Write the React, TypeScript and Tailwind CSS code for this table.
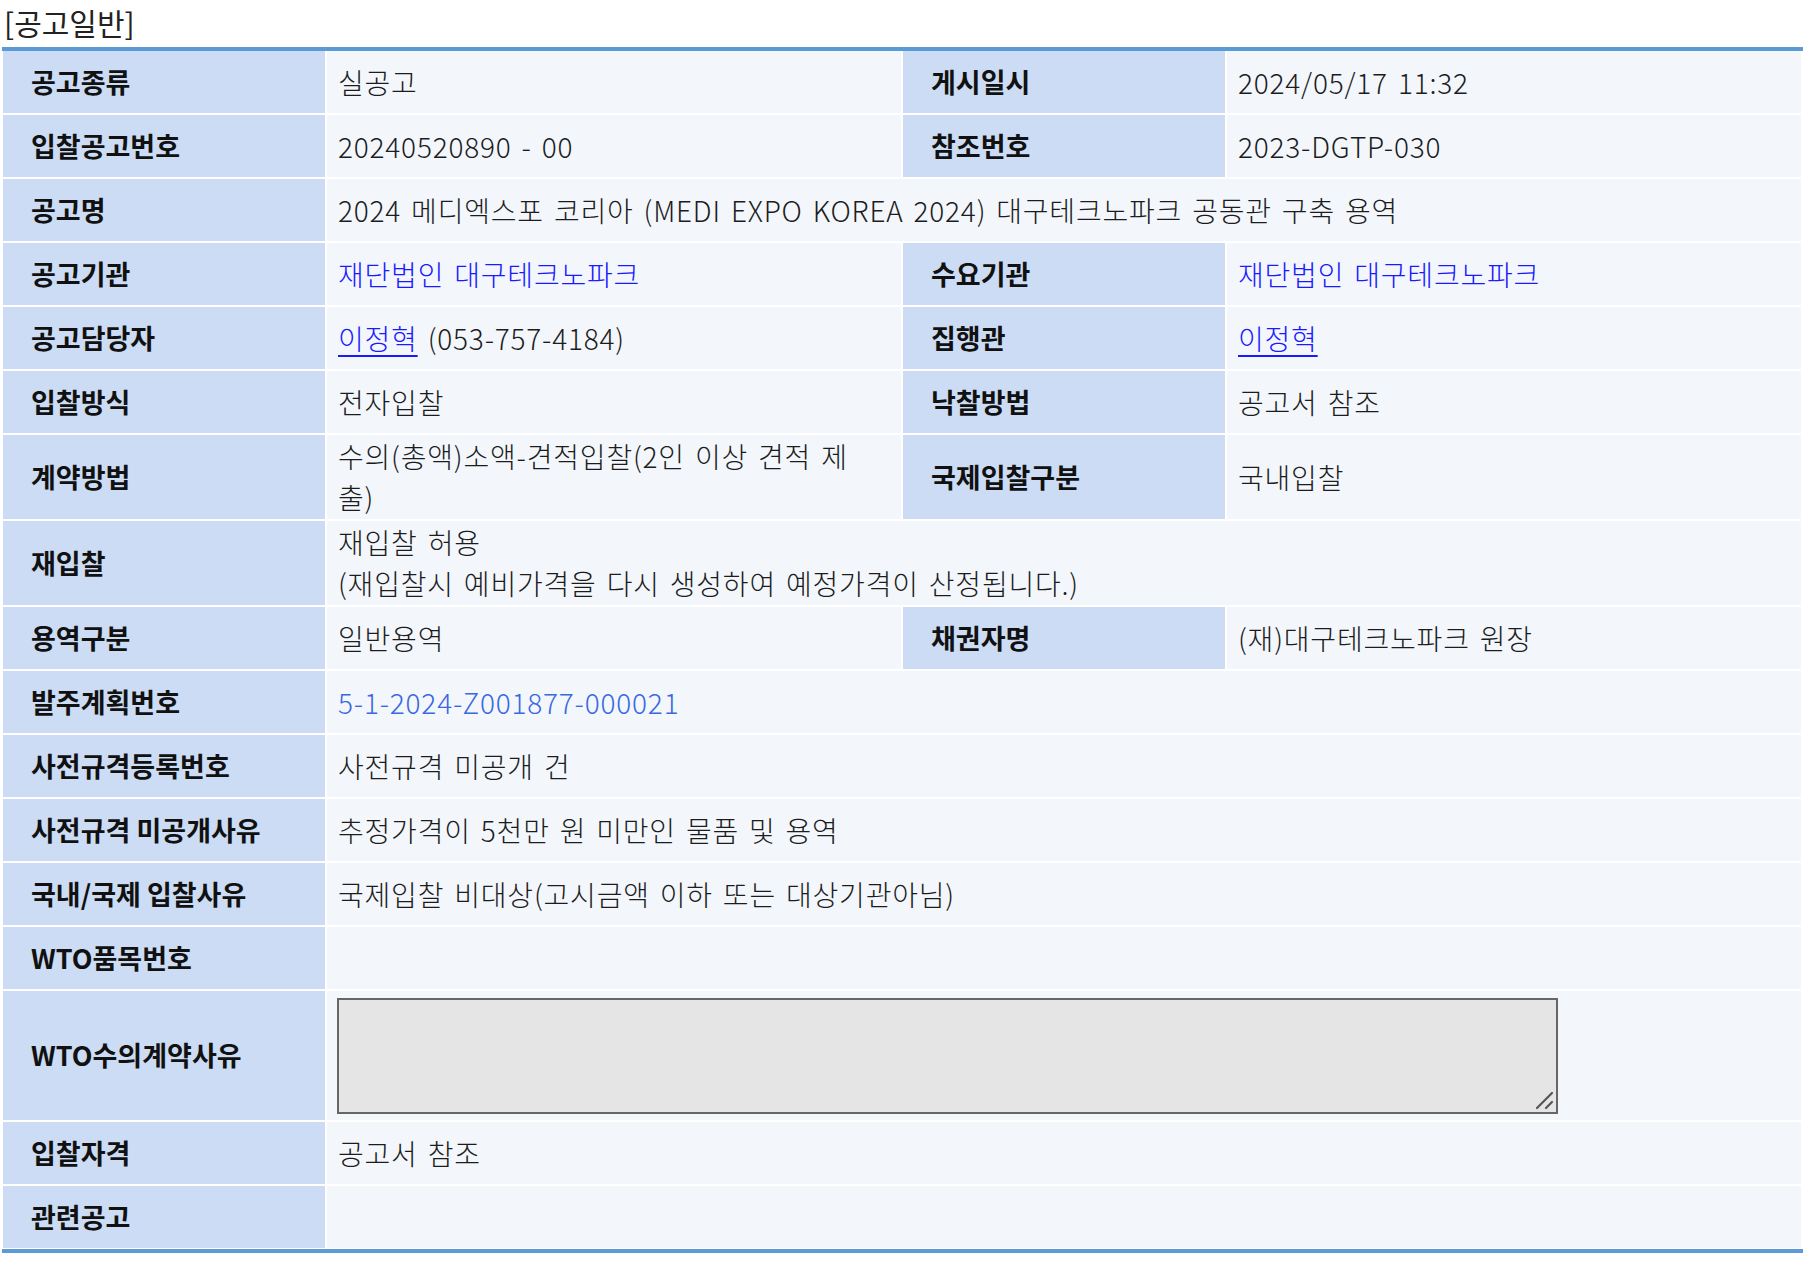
import React from "react";

const LABEL =
  "bg-[#cbdcf4] flex items-center pl-[28px] pr-2 text-[27px] font-bold text-[#111] whitespace-nowrap";
const VALUE =
  "bg-[#f3f7fc] flex items-center pl-[11px] pr-2 py-[1px] text-[28px] leading-[41px] tracking-[0.8px] text-[#1c1c1c] font-light [word-spacing:3px]";

const LINK = "text-[#1a1aff]";

type Cell = { label: string; value: React.ReactNode };

function Label({ children }: { children: React.ReactNode }) {
  return <div className={LABEL}>{children}</div>;
}

function Value({ children, span }: { children?: React.ReactNode; span?: boolean }) {
  return <div className={VALUE + (span ? " col-span-3" : "")}>{children}</div>;
}

function Pair({ a, b }: { a: Cell; b: Cell }) {
  return (
    <>
      <Label>{a.label}</Label>
      <Value>{a.value}</Value>
      <Label>{b.label}</Label>
      <Value>{b.value}</Value>
    </>
  );
}

function Full({ label, children }: { label: string; children?: React.ReactNode }) {
  return (
    <>
      <Label>{label}</Label>
      <Value span>{children}</Value>
    </>
  );
}

export default function App() {
  return (
    <div
      className="w-[1813px] min-h-[1267px] bg-white"
      style={{ fontFamily: '"Noto Sans CJK KR", "Noto Sans", sans-serif' }}
    >
      <div className="h-[47px] pl-[4px] text-[30px] leading-[44px] text-[#222]">[공고일반]</div>
      <div className="ml-[2px] w-[1801px] border-t-4 border-b-4 border-[#5b9bd5] pl-[1px] pb-[1px]">
        <div className="grid grid-cols-[322px_574px_322px_574px] auto-rows-[minmax(62px,auto)] gap-[2px]">
          <Pair a={{ label: "공고종류", value: "실공고" }} b={{ label: "게시일시", value: "2024/05/17 11:32" }} />
          <Pair
            a={{ label: "입찰공고번호", value: "20240520890 - 00" }}
            b={{ label: "참조번호", value: "2023-DGTP-030" }}
          />
          <Full label="공고명">2024 메디엑스포 코리아 (MEDI EXPO KOREA 2024) 대구테크노파크 공동관 구축 용역</Full>
          <Pair
            a={{ label: "공고기관", value: <span className={LINK}>재단법인 대구테크노파크</span> }}
            b={{ label: "수요기관", value: <span className={LINK}>재단법인 대구테크노파크</span> }}
          />
          <Pair
            a={{
              label: "공고담당자",
              value: (
                <span>
                  <span className={LINK + " underline underline-offset-[5px]"}>이정혁</span> (053-757-4184)
                </span>
              ),
            }}
            b={{
              label: "집행관",
              value: <span className={LINK + " underline underline-offset-[5px]"}>이정혁</span>,
            }}
          />
          <Pair a={{ label: "입찰방식", value: "전자입찰" }} b={{ label: "낙찰방법", value: "공고서 참조" }} />
          <Pair
            a={{
              label: "계약방법",
              value: (
                <span>
                  <span className="whitespace-nowrap">수의(총액)소액-견적입찰(2인 이상 견적 제</span>
                  <br />
                  출)
                </span>
              ),
            }}
            b={{ label: "국제입찰구분", value: "국내입찰" }}
          />
          <Full label="재입찰">
            <span>
              재입찰 허용
              <br />
              (재입찰시 예비가격을 다시 생성하여 예정가격이 산정됩니다.)
            </span>
          </Full>
          <Pair a={{ label: "용역구분", value: "일반용역" }} b={{ label: "채권자명", value: "(재)대구테크노파크 원장" }} />
          <Full label="발주계획번호">
            <span className="text-[#3a68e0]">5-1-2024-Z001877-000021</span>
          </Full>
          <Full label="사전규격등록번호">사전규격 미공개 건</Full>
          <Full label="사전규격 미공개사유">추정가격이 5천만 원 미만인 물품 및 용역</Full>
          <Full label="국내/국제 입찰사유">국제입찰 비대상(고시금액 이하 또는 대상기관아님)</Full>
          <Full label="WTO품목번호" />
          <Label>WTO수의계약사유</Label>
          <div className="col-span-3 bg-[#f3f7fc] pl-[10px] pt-[7px] pb-[6px] h-[129px]">
            <div className="relative w-[1221px] h-[116px]">
              <textarea
                readOnly
                className="block w-full h-full resize-none border-2 border-[#666] bg-[#e5e5e5] outline-none"
              />
              <svg
                className="absolute right-[3px] bottom-[3px]"
                width="20"
                height="20"
                viewBox="0 0 20 20"
              >
                <line x1="2" y1="17" x2="17" y2="2" stroke="#555" strokeWidth="2.2" strokeLinecap="round" />
                <line x1="11" y1="17" x2="17" y2="11" stroke="#555" strokeWidth="2.2" strokeLinecap="round" />
              </svg>
            </div>
          </div>
          <Full label="입찰자격">공고서 참조</Full>
          <Full label="관련공고" />
        </div>
      </div>
    </div>
  );
}
